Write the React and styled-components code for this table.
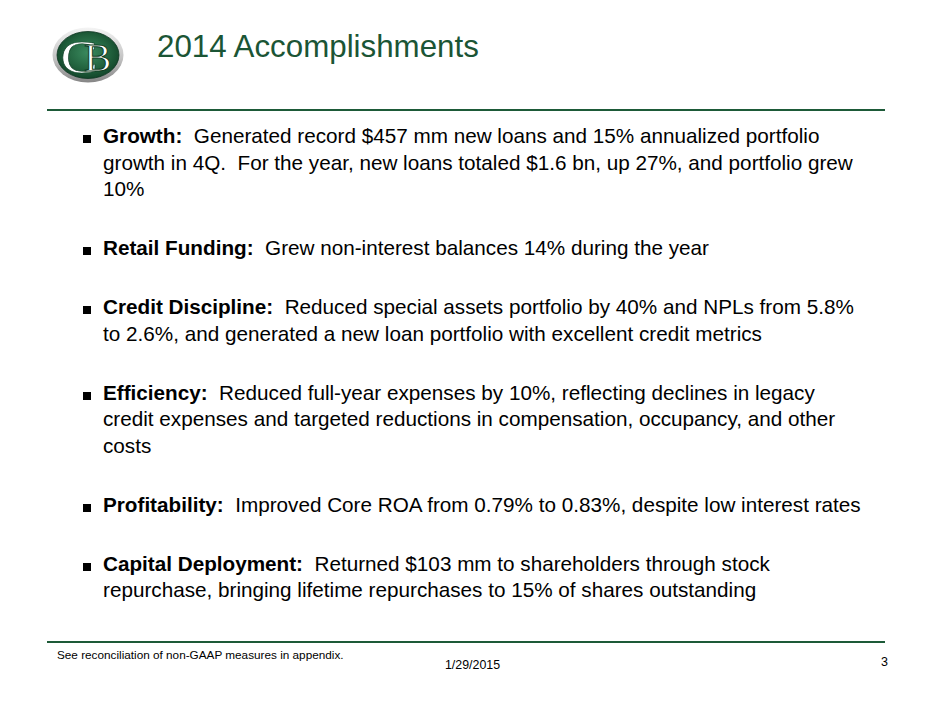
import React from 'react';
import styled, { createGlobalStyle } from 'styled-components';

const GlobalStyle = createGlobalStyle`
  html, body {
    margin: 0;
    padding: 0;
    background: #ffffff;
  }
  body {
    font-family: "Liberation Sans", Arial, Helvetica, sans-serif;
    color: #000000;
  }
`;

const ITEMS = [
  {
    id: 1,
    label: 'Growth:',
    text: 'Generated record $457 mm new loans and 15% annualized portfolio growth in 4Q.  For the year, new loans totaled $1.6 bn, up 27%, and portfolio grew 10%',
  },
  {
    id: 2,
    label: 'Retail Funding:',
    text: 'Grew non-interest balances 14% during the year',
  },
  {
    id: 3,
    label: 'Credit Discipline:',
    text: 'Reduced special assets portfolio by 40% and NPLs from 5.8% to 2.6%, and generated a new loan portfolio with excellent credit metrics',
  },
  {
    id: 4,
    label: 'Efficiency:',
    text: 'Reduced full-year expenses by 10%, reflecting declines in legacy credit expenses and targeted reductions in compensation, occupancy, and other costs',
  },
  {
    id: 5,
    label: 'Profitability:',
    text: 'Improved Core ROA from 0.79% to 0.83%, despite low interest rates',
  },
  {
    id: 6,
    label: 'Capital Deployment:',
    text: 'Returned $103 mm to shareholders through stock repurchase, bringing lifetime repurchases to 15% of shares outstanding',
  },
];

const Logo = () => (
  <LogoSvg viewBox="0 0 72 56" width="72" height="56">
    <defs>
      <linearGradient id="rim" x1="0" y1="0" x2="0" y2="1">
        <stop offset="0" stopColor="#f4f4f4" />
        <stop offset="0.55" stopColor="#c4c4c4" />
        <stop offset="1" stopColor="#858585" />
      </linearGradient>
      <radialGradient id="field" cx="0.5" cy="0.45" r="0.6">
        <stop offset="0" stopColor="#3a8a5e" />
        <stop offset="0.6" stopColor="#21613d" />
        <stop offset="1" stopColor="#0f3f25" />
      </radialGradient>
    </defs>
    <ellipse cx="36" cy="28" rx="35.5" ry="27.5" fill="url(#rim)" />
    <ellipse cx="36" cy="28" rx="31" ry="23.5" fill="url(#field)" stroke="#0b3320" strokeWidth="0.8" />
    <text
      x="7"
      y="46"
      fontFamily="'Liberation Serif', 'Times New Roman', serif"
      fontSize="47"
      fill="#ffffff"
      stroke="#0f3f25"
      strokeWidth="0.6"
      transform="scale(1.2 1)"
    >
      C
    </text>
    <text
      x="32"
      y="44"
      fontFamily="'Liberation Serif', 'Times New Roman', serif"
      fontSize="41"
      fill="#ffffff"
      stroke="#0f3f25"
      strokeWidth="1.1"
    >
      B
    </text>
  </LogoSvg>
);

const App = () => {
  return (
    <>
      <GlobalStyle />
      <Slide>
        <Header>
          <Logo />
          <Title>2014 Accomplishments</Title>
        </Header>
        <Rule />
        <Main>
          <BulletList>
            {ITEMS.map(item => {
              const { id, label, text } = item;
              return (
                <BulletItem key={id}>
                  <BulletMark />
                  <BulletText>
                    <BulletLabel>{label}</BulletLabel>
                    {'  ' + text}
                  </BulletText>
                </BulletItem>
              );
            })}
          </BulletList>
        </Main>
        <Rule />
        <Footer>
          <FooterNote>See reconciliation of non-GAAP measures in appendix.</FooterNote>
          <FooterDate>1/29/2015</FooterDate>
          <PageNumber>3</PageNumber>
        </Footer>
      </Slide>
    </>
  );
};

const Slide = styled.div`
  width: 940px;
  height: 705px;
  display: flex;
  flex-direction: column;
  overflow: hidden;
  background: #ffffff;
`;

const Header = styled.header`
  height: 109px;
  box-sizing: border-box;
  display: flex;
  align-items: flex-start;
  padding: 27px 0 0 52px;
`;

const LogoSvg = styled.svg`
  display: block;
  flex-shrink: 0;
`;

const Title = styled.h1`
  margin: 4px 0 0 33px;
  font-size: 31.3px;
  line-height: 32px;
  font-weight: normal;
  color: #1b5535;
`;

const Rule = styled.div`
  height: 2px;
  margin: 0 55px 0 47px;
  background: #1d5a38;
  flex-shrink: 0;
`;

const Main = styled.main`
  flex: 1;
  padding: 12px 0 0 83px;
`;

const BulletList = styled.ul`
  list-style: none;
  margin: 0;
  padding: 0;
  display: flex;
  flex-direction: column;
  gap: 32.5px;
`;

const BulletItem = styled.li`
  display: flex;
  align-items: flex-start;
`;

const BulletMark = styled.span`
  width: 8px;
  height: 8px;
  margin: 12px 12px 0 0;
  background: #000000;
  flex-shrink: 0;
`;

const BulletText = styled.p`
  margin: 0;
  width: 764px;
  font-size: 20.7px;
  line-height: 26.5px;
  white-space: pre-wrap;
`;

const BulletLabel = styled.strong`
  font-weight: bold;
`;

const Footer = styled.footer`
  height: 62px;
  display: grid;
  grid-template-columns: 1fr auto 1fr;
  align-items: start;
  padding: 0 52px 0 57px;
`;

const FooterNote = styled.span`
  margin-top: 5px;
  font-size: 11.75px;
  line-height: 14px;
`;

const FooterDate = styled.span`
  margin-top: 15px;
  font-size: 12.4px;
  line-height: 15px;
`;

const PageNumber = styled.span`
  justify-self: end;
  margin-top: 12px;
  font-size: 12.5px;
  line-height: 15px;
`;

export default App;
